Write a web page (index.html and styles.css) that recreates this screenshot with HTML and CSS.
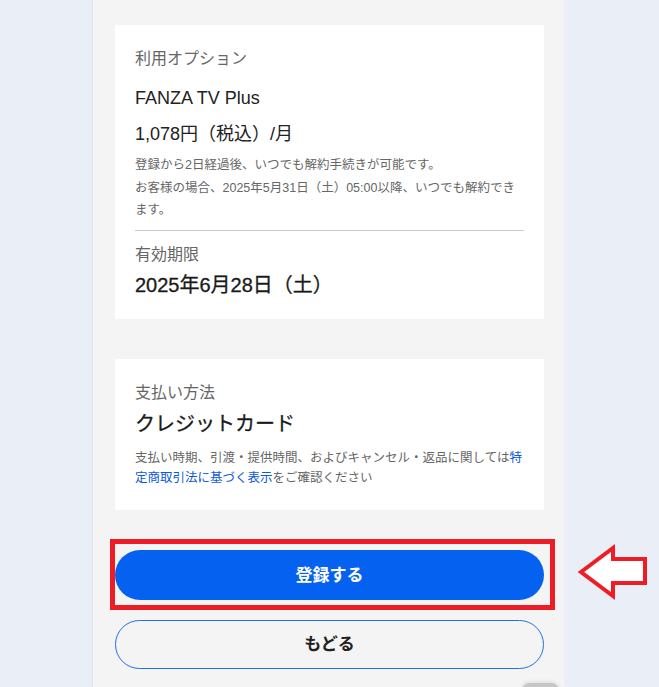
FILE: index.html
```html
<!DOCTYPE html>
<html lang="ja">
<head>
<meta charset="utf-8">
<title>利用オプション確認</title>
<link rel="stylesheet" href="styles.css">
</head>
<body>
<main class="panel">
  <section class="card card-option">
    <p class="label">利用オプション</p>
    <p class="plan">FANZA TV Plus</p>
    <p class="price">1,078円（税込）/月</p>
    <p class="note">登録から2日経過後、いつでも解約手続きが可能です。<br>お客様の場合、2025年5月31日（土）05:00以降、いつでも解約できます。</p>
    <hr class="divider">
    <p class="label label-expiry">有効期限</p>
    <p class="value">2025年6月28日（土）</p>
  </section>

  <section class="card card-pay">
    <p class="label">支払い方法</p>
    <p class="value value-pay">クレジットカード</p>
    <p class="note note-pay">支払い時期、引渡・提供時間、およびキャンセル・返品に関しては<a class="link" href="#">特定商取引法に基づく表示</a>をご確認ください</p>
  </section>

  <div class="cta">
    <button class="btn btn-primary" type="button">登録する</button>
    <span class="highlight"></span>
    <svg class="arrow" width="76" height="58" viewBox="0 0 76 58" aria-hidden="true">
      <polygon points="6,29 38,5 38,16 70,16 70,40 38,40 38,53" fill="#ffffff" stroke="#ee1c25" stroke-width="4" stroke-linejoin="miter"/>
    </svg>
  </div>
  <button class="btn btn-back" type="button">もどる</button>
</main>
<div class="float-btn"></div>
</body>
</html>
```
FILE: styles.css
```css
* { box-sizing: border-box; }

html, body {
  margin: 0;
  padding: 0;
}

body {
  background: #e9eef7;
  font-family: "Liberation Sans", "Noto Sans CJK JP", sans-serif;
  color: #222;
  height: 687px;
  overflow: hidden;
  position: relative;
}

p { margin: 0; }

.panel {
  margin-left: 92px;
  width: 472px;
  min-height: 687px;
  background: #f4f4f4;
  border-left: 1px solid #dce1ea;
  box-shadow: inset 1px 0 0 #fafafa;
  padding: 25px 20px 0 22px;
}

.card {
  background: #ffffff;
  padding: 22px 20px 19px 20px;
}

.card-pay {
  margin-top: 40px;
  padding-top: 22px;
  padding-bottom: 22px;
}

.label {
  font-size: 16px;
  line-height: 24px;
  color: #666;
}

.plan {
  margin-top: 14px;
  font-size: 18px;
  line-height: 27px;
  color: #222;
}

.price {
  margin-top: 9px;
  font-size: 18px;
  line-height: 27px;
  color: #222;
}

.note {
  margin-top: 6px;
  font-size: 12.5px;
  line-height: 22.5px;
  color: #666;
}

.divider {
  border: 0;
  border-top: 1px solid #c9c9c9;
  margin: 8px 0 0 0;
}

.label-expiry {
  margin-top: 12px;
}

.value {
  margin-top: 3px;
  font-size: 20px;
  line-height: 30px;
  font-weight: 400;
  color: #1a1a1a;
  -webkit-text-stroke: 0.3px #1a1a1a;
}

.value-pay {
  margin-top: 4px;
}

.note-pay {
  margin-top: 9px;
  line-height: 20px;
}

.link {
  color: #0b5bd7;
  text-decoration: none;
}

.cta {
  position: relative;
  margin-top: 40px;
}

.btn {
  display: block;
  width: 100%;
  border-radius: 25px;
  padding: 0 0 3px 0;
  font-family: "Liberation Sans", "Noto Sans CJK JP", sans-serif;
  font-size: 17px;
  font-weight: 700;
  cursor: pointer;
}

.btn-primary {
  height: 50px;
  border: 0;
  background: #0562f0;
  color: #ffffff;
}

.btn-back {
  margin-top: 20px;
  height: 49px;
  border: 1px solid #1f6fe6;
  background: transparent;
  color: #222;
}

.highlight {
  position: absolute;
  left: -5px;
  top: -11px;
  right: -11px;
  bottom: -10px;
  border: 5px solid #ee1c25;
  pointer-events: none;
}

.arrow {
  position: absolute;
  left: 460px;
  top: -7px;
}

.float-btn {
  position: absolute;
  left: 522px;
  top: 683px;
  width: 37px;
  height: 20px;
  background: #c6c6c6;
  border-radius: 8px 8px 0 0;
  box-shadow: 0 0 5px rgba(0, 0, 0, 0.15);
}
```
